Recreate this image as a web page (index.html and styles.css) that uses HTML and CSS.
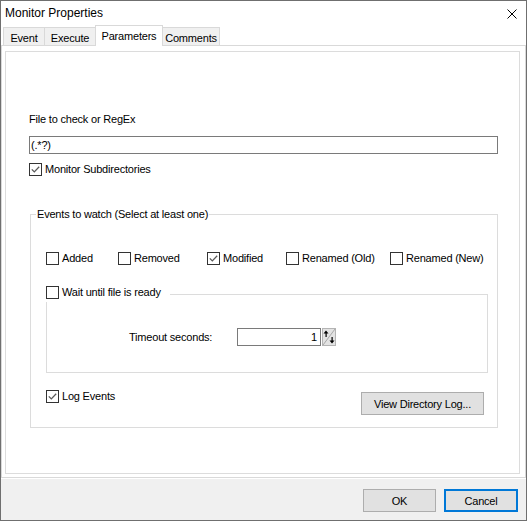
FILE: index.html
```html
<!DOCTYPE html>
<html lang="en">
<head>
    <meta charset="UTF-8">
    <title>Monitor Properties</title>
    <link rel="stylesheet" href="styles.css">
</head>
<body>
    <div class="window">
        <header class="titlebar">
            <span class="title">Monitor Properties</span>
            <svg class="close" width="10" height="10" viewBox="0 0 10 10"><path d="M0.5 0.5L9.5 9.5M9.5 0.5L0.5 9.5" stroke="#000" stroke-width="1" fill="none"/></svg>
        </header>

        <nav class="tabs">
            <span class="tab tab-event">Event</span>
            <span class="tab tab-execute">Execute</span>
            <span class="tab tab-params active">Parameters</span>
            <span class="tab tab-comments">Comments</span>
        </nav>

        <div class="pane">
            <div class="page">
                <label class="field-label">File to check or RegEx</label>
                <div class="textbox">(.*?)</div>
                <label class="check"><span class="box"><svg width="11" height="11" viewBox="0 0 11 11"><path d="M1.8 5.4L4.3 7.9L9.2 2.8" stroke="#5a5a5a" stroke-width="1.3" fill="none"/></svg></span>Monitor Subdirectories</label>

                <fieldset class="group events">
                    <legend>Events to watch (Select at least one)</legend>
                    <div class="event-row">
                        <label class="check"><span class="box"></span>Added</label>
                        <label class="check"><span class="box"></span>Removed</label>
                        <label class="check"><span class="box"><svg width="11" height="11" viewBox="0 0 11 11"><path d="M1.8 5.4L4.3 7.9L9.2 2.8" stroke="#5a5a5a" stroke-width="1.3" fill="none"/></svg></span>Modified</label>
                        <label class="check"><span class="box"></span>Renamed (Old)</label>
                        <label class="check"><span class="box"></span>Renamed (New)</label>
                    </div>

                    <fieldset class="group wait">
                        <legend><label class="check"><span class="box"></span>Wait until file is ready</label></legend>
                        <div class="timeout-row">
                            <span class="timeout-label">Timeout seconds:</span>
                            <span class="numbox">1</span>
                            <!-- up/down spinner -->
                            <svg class="spin" width="14" height="18" viewBox="0 0 14 18">
                                <rect x="0.5" y="0.5" width="13" height="17" fill="#e3e3e3" stroke="#b4b4b4"/>
                                <path d="M1 17L13 1" stroke="#a8a8a8" stroke-width="1"/>
                                <path d="M4 2.5L1.5 5.5H6.5Z" fill="#000"/>
                                <rect x="3.5" y="5" width="1.2" height="4" fill="#000"/>
                                <path d="M10 15.5L7.5 12.5H12.5Z" fill="#000"/>
                                <rect x="9.5" y="9" width="1.2" height="4" fill="#000"/>
                            </svg>
                        </div>
                    </fieldset>

                    <div class="log-row">
                        <label class="check"><span class="box"><svg width="11" height="11" viewBox="0 0 11 11"><path d="M1.8 5.4L4.3 7.9L9.2 2.8" stroke="#5a5a5a" stroke-width="1.3" fill="none"/></svg></span>Log Events</label>
                        <button class="btn btn-log">View Directory Log...</button>
                    </div>
                </fieldset>
            </div>
        </div>

        <footer class="footer">
            <button class="btn btn-ok">OK</button>
            <button class="btn btn-cancel">Cancel</button>
        </footer>
    </div>
</body>
</html>
```

FILE: styles.css
```css
* { box-sizing: border-box; }
body {
    margin: 0;
    font-family: "Liberation Sans", Arial, sans-serif;
    font-size: 11px;
    letter-spacing: -0.2px;
    color: #000;
}

.window {
    width: 527px;
    height: 521px;
    border: 1px solid #6f6f6f;
    background: #fff;
    display: flex;
    flex-direction: column;
}

/* title bar */
.titlebar {
    height: 24px;
    flex: none;
    display: flex;
    align-items: center;
    justify-content: space-between;
    padding: 0 9px 0 4px;
    font-size: 12px;
    letter-spacing: 0;
}
.close { margin-top: 2px; }

/* tab strip */
.tabs {
    height: 20px;
    flex: none;
    display: flex;
    align-items: flex-end;
    padding-left: 2px;
    position: relative;
    z-index: 1;
}
.tab {
    height: 18px;
    border: 1px solid #d9d9d9;
    border-bottom: 0;
    background: #f0f0f0;
    text-align: center;
    padding-top: 3px;
    line-height: 14px;
    margin-left: -1px;
}
.tab-event { width: 42px; margin-left: 0; }
.tab-execute { width: 52px; }
.tab-params { width: 68px; }
.tab-comments { width: 58px; }
.tab.active {
    height: 21px;
    background: #fff;
    margin-bottom: -1px;
}

.pane {
    height: 433px;
    flex: none;
    border: 1px solid #d9d9d9;
    padding: 5px 5px 3px 3px;
    display: flex;
}
.page {
    flex: 1;
    border: 1px solid #dcdcdc;
    padding: 60px 21px 0 23px;
}

.field-label { display: block; line-height: 14px; }
.textbox {
    margin-top: 10px;
    height: 18px;
    border: 1px solid #7a7a7a;
    padding-left: 1px;
    line-height: 16px;
}

/* checkbox + caption */
.check {
    display: flex;
    align-items: center;
    gap: 3px;
    height: 13px;
    line-height: 13px;
    white-space: nowrap;
}
.box {
    width: 13px;
    height: 13px;
    flex: none;
    border: 1px solid #333;
    background: #fff;
}
.box svg { display: block; }
.page > .check { margin-top: 9px; }

/* group boxes */
.group {
    margin: 0;
    padding: 0;
    min-width: 0;
    border: 1px solid #dcdcdc;
}
.events {
    margin: 31px 0 0 1px;
    padding: 0 9px 12px 0;
}
.events > legend {
    padding: 0 1px;
    margin-left: 5px;
    line-height: 14px;
}
.event-row {
    display: grid;
    grid-template-columns: 72px 89px 79px 104px auto;
    margin: 31px 0 0 15px;
}

.wait {
    margin: 21px 0 0 15px;
    padding: 0 0 26px 0;
}
.wait > legend {
    height: 16px;
    padding: 0 9px 0 0;
    margin-left: -1px;
}
.timeout-row {
    display: flex;
    align-items: center;
    margin-top: 26px;
    padding-left: 82px;
}
.timeout-label { width: 108px; }
.numbox {
    width: 84px;
    height: 18px;
    border: 1px solid #7a7a7a;
    text-align: right;
    padding-right: 3px;
    line-height: 16px;
}
.spin { display: block; margin-left: 1px; }

.log-row {
    display: flex;
    justify-content: space-between;
    align-items: flex-start;
    margin: 17px 0 0 15px;
}

/* push buttons */
.btn {
    font: inherit;
    letter-spacing: inherit;
    color: #000;
    height: 23px;
    padding: 0;
    border: 1px solid #adadad;
    background: #e1e1e1;
}
.btn-log { width: 123px; margin: 2px 4px 0 0; }
.btn-ok { width: 73px; }
.btn-cancel { width: 74px; border: 2px solid #0078d7; }

.footer {
    flex: 1;
    margin-top: 1px;
    background: #f0f0f0;
    display: flex;
    justify-content: flex-end;
    align-items: flex-start;
    gap: 8px;
    padding: 10px 8px 0 0;
}
```
